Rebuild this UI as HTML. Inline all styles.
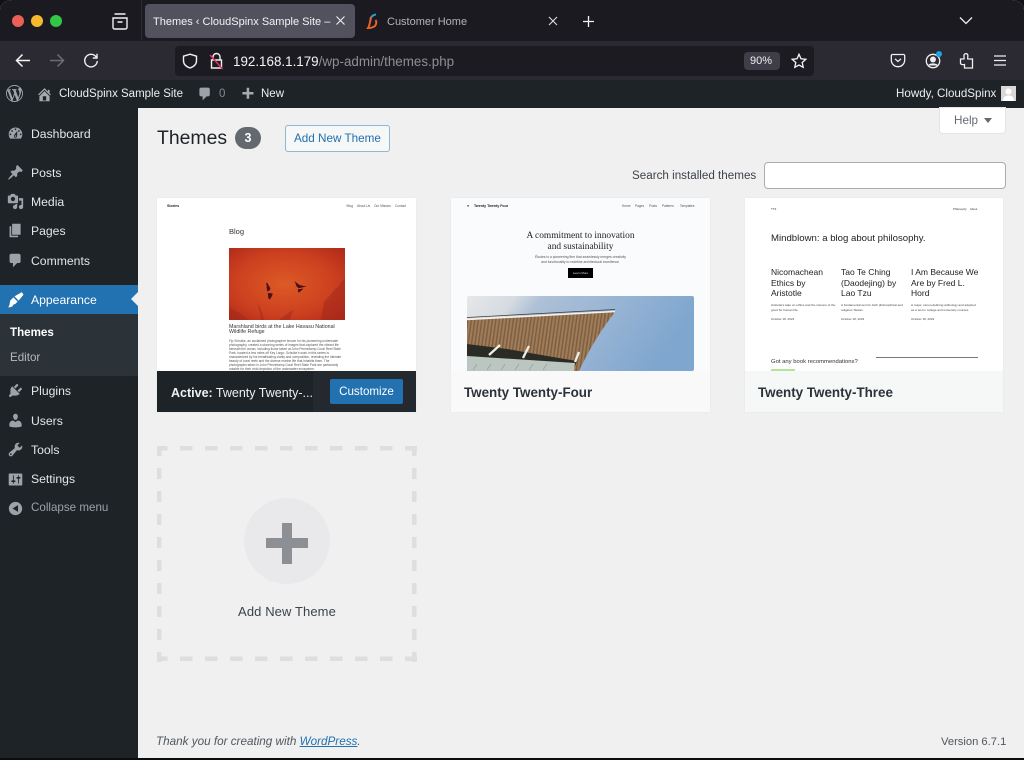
<!DOCTYPE html>
<html><head><meta charset="utf-8"><style>
html,body{margin:0;padding:0;background:#111}
#r{position:relative;width:1024px;height:760px;overflow:hidden;background:#f0f0f1;font-family:"Liberation Sans",sans-serif;border-radius:12px 12px 0 0/10px 10px 0 0}
#r div,#r span.a,#r svg{position:absolute}
.t{position:absolute;white-space:nowrap;line-height:16px}
.m{color:#e4e6e8;font-size:12.200px;left:31px}
.i{left:7px;width:17px;height:17px;fill:#9ca2a7}
.n{font-size:3.200px;color:#555}
</style></head><body><div id="r">
<!-- browser chrome -->
<div style="left:0;top:0;width:1024px;height:42px;background:#1a1a20"></div>
<div style="left:0;top:41px;width:1024px;height:39px;background:#2b2a32"></div>
<div style="left:175px;top:46px;width:639px;height:30px;background:#1c1b22;border-radius:4px"></div>
<div style="left:0;top:80px;width:1024px;height:28px;background:#1d2327"></div>
<div style="left:12px;top:15px;width:12px;height:12px;border-radius:50%;background:#ec5f56"></div>
<div style="left:31px;top:15px;width:12px;height:12px;border-radius:50%;background:#f5b82e"></div>
<div style="left:50px;top:15px;width:12px;height:12px;border-radius:50%;background:#33c748"></div>
<svg style="left:111px;top:13px" width="18" height="17" viewBox="0 0 18 17" fill="none" stroke="#f2f2f2" stroke-width="1.400"><path d="M3.500 1h11M2 5h14v9.500a1.500 1.500 0 0 1-1.500 1.500h-11A1.500 1.500 0 0 1 2 14.500zM6.500 9h5"/></svg>
<div style="left:141px;top:0;width:1px;height:41px;background:#2a2a30"></div>
<div style="left:145px;top:4px;width:210px;height:34px;background:#52525e;border-radius:4px"></div>
<span class="t" style="left:153px;top:14px;font-size:11px;color:#f3f3f5;width:180px;overflow:hidden">Themes ‹ CloudSpinx Sample Site –</span>
<svg style="left:335px;top:15px" width="11" height="11" viewBox="0 0 11 11" stroke="#eee" stroke-width="1.100"><path d="M1.500 1.500l8 8M9.500 1.500l-8 8"/></svg>
<svg style="left:366px;top:13px" width="15" height="17" viewBox="0 0 15 17" fill="none"><path d="M10 1.500C6 2 4 5 4.500 8" stroke="#2aa0c8" stroke-width="2"/><path d="M5 4c-1 4-1 8-3 11 3 0 5-.5 7-2 1-1.500 2-4 .5-6" stroke="#e8622c" stroke-width="2"/></svg>
<span class="t" style="left:387px;top:14px;font-size:11px;color:#b4b4b8">Customer Home</span>
<svg style="left:548px;top:16px" width="10" height="10" viewBox="0 0 10 10" stroke="#ddd" stroke-width="1.100"><path d="M1 1l8 8M9 1l-8 8"/></svg>
<svg style="left:582px;top:15px" width="13" height="13" viewBox="0 0 13 13" stroke="#f2f2f2" stroke-width="1.300"><path d="M6.500 1v11M1 6.500h11"/></svg>
<svg style="left:959px;top:16px" width="14" height="9" viewBox="0 0 14 9" fill="none" stroke="#eee" stroke-width="1.300"><path d="M1 1.500l6 6 6-6"/></svg>
<svg style="left:15px;top:53px" width="16" height="15" viewBox="0 0 16 15" fill="none" stroke="#f4f4f4" stroke-width="1.500"><path d="M15 7.500H2M7.500 1.500l-6 6 6 6"/></svg>
<svg style="left:49px;top:53px" width="16" height="15" viewBox="0 0 16 15" fill="none" stroke="#6c6c72" stroke-width="1.500"><path d="M1 7.500h13M8.500 1.500l6 6-6 6"/></svg>
<svg style="left:83px;top:53px" width="16" height="15" viewBox="0 0 16 15" fill="none" stroke="#f0f0f0" stroke-width="1.400"><path d="M13.500 4.500A6.300 6.300 0 1 0 14.300 8M14 .8v4.200H9.800"/></svg>
<svg style="left:182px;top:53px" width="16" height="16" viewBox="0 0 16 16" fill="none" stroke="#f0f0f0" stroke-width="1.400"><path d="M8 1.200l6.500 2v4.500c0 3.500-3 6-6.500 7.300-3.500-1.300-6.500-3.800-6.500-7.300V3.200z"/></svg>
<svg style="left:209px;top:52px" width="15" height="18" viewBox="0 0 15 18" fill="none"><path d="M4 8V5a3.500 3.500 0 0 1 7 0v3M2.500 8h10v8h-10z" stroke="#f0f0f0" stroke-width="1.400"/><path d="M1 3l12.500 14" stroke="#e0325a" stroke-width="1.500"/></svg>
<span class="t" style="left:233px;top:54px;font-size:13.400px;color:#f5f5f6">192.168.1.179<span style="color:#8e8e94">/wp-admin/themes.php</span></span>
<div style="left:744px;top:52px;width:36px;height:18px;background:#3f3e48;border-radius:4px"></div>
<span class="t" style="left:750px;top:53px;font-size:11px;color:#f0f0f0">90%</span>
<svg style="left:791px;top:53px" width="16" height="16" viewBox="0 0 16 16" fill="none" stroke="#f4f4f4" stroke-width="1.300"><path d="M8 1.300l2 4.500 4.800.5-3.600 3.200 1 4.800L8 12l-4.200 2.300 1-4.800L1.200 6.300 6 5.800z"/></svg>
<svg style="left:890px;top:53px" width="16" height="15" viewBox="0 0 16 15" fill="none" stroke="#f0f0f0" stroke-width="1.300"><path d="M2.500 1.500h11a1.200 1.200 0 0 1 1.200 1.200V7a6.700 6.700 0 0 1-13.400 0V2.700a1.200 1.200 0 0 1 1.200-1.200zM5 5.800l3 2.700 3-2.700"/></svg>
<svg style="left:925px;top:53px" width="16" height="16" viewBox="0 0 16 16" fill="none" stroke="#f0f0f0" stroke-width="1.300"><circle cx="8" cy="8" r="6.700"/><circle cx="8" cy="6.500" r="2.300" fill="#f0f0f0"/><path d="M3.800 12.500c1-2 7.400-2 8.400 0" fill="#f0f0f0"/></svg>
<div style="left:936px;top:51px;width:6px;height:6px;border-radius:50%;background:#1aa5e8"></div>
<svg style="left:959px;top:52px" width="15" height="17" viewBox="0 0 15 17" fill="none" stroke="#f0f0f0" stroke-width="1.300"><path d="M1.500 7H5C5.800 6 4.500 5 5 3.200 5.500 1.200 8.300 1 8.800 3c.4 1.500-.6 3 0 4h4.700v9H5.500v-3.500C4 12.800 1.500 12.800 1.500 11z"/></svg>
<svg style="left:994px;top:55px" width="12" height="11" viewBox="0 0 12 11" stroke="#eee" stroke-width="1.300"><path d="M0 1h12M0 5.500h12M0 10h12"/></svg>
<!-- admin bar -->
<svg style="left:6px;top:85px" width="17" height="17" viewBox="0 0 20 20" fill="#9ca2a7"><path d="M20 10c0-5.510-4.490-10-10-10C4.480 0 0 4.490 0 10c0 5.520 4.480 10 10 10 5.510 0 10-4.480 10-10zM7.780 15.370L4.370 6.220c.55-.02 1.170-.08 1.170-.08.5-.06.44-1.130-.06-1.110 0 0-1.450.11-2.370.11-.18 0-.37 0-.58-.01C4.120 2.690 6.890 1.160 10 1.160c2.320 0 4.430.83 6.020 2.260-.68-.11-1.650.39-1.650 1.580 0 .74.45 1.360.9 2.100.35.610.55 1.360.55 2.460 0 1.490-1.400 5-1.400 5l-3.030-8.370c.54-.02.82-.17.82-.17.5-.05.44-1.250-.06-1.220 0 0-1.440.12-2.380.12-.87 0-2.330-.12-2.330-.12-.5-.03-.56 1.200-.06 1.220l.92.08 1.260 3.410zM17.410 10c.24-.64.74-1.870.43-4.250.7 1.290 1.050 2.710 1.050 4.250 0 3.290-1.730 6.240-4.480 7.820.99-2.650 1.990-5.180 3-7.820zM6.100 18.090C3.120 16.650 1.110 13.530 1.110 10c0-1.300.23-2.480.72-3.590C3.250 10.300 4.670 14.200 6.100 18.090zm4.030-6.630l2.580 6.980c-.86.290-1.760.45-2.710.45-.79 0-1.570-.11-2.290-.33.810-2.380 1.620-4.740 2.420-7.100z"/></svg>
<svg style="left:36px;top:86px" width="17" height="17" viewBox="0 0 20 20" fill="#a5aaae"><path d="M16 8.500l1.530 1.530-1.060 1.060L10 4.620l-6.470 6.470-1.060-1.060L10 2.500l4 4v-2h2v4zm-6-2.460l6 5.990V18H4v-5.970zM12 17v-5H8v5h4z"/></svg>
<span class="t" style="left:59px;top:86px;font-size:11.500px;color:#eceeef">CloudSpinx Sample Site</span>
<svg style="left:197px;top:86px" width="16" height="16" viewBox="0 0 20 20" fill="#9ca2a7"><path d="M5 2h9c1.100 0 2 .9 2 2v7c0 1.100-.9 2-2 2h-2l-5 5v-5H5c-1.100 0-2-.9-2-2V4c0-1.100.9-2 2-2z"/></svg>
<span class="t" style="left:219px;top:86px;font-size:11.500px;color:#84898d">0</span>
<svg style="left:239px;top:86px" width="17" height="17" viewBox="0 0 20 20" fill="#a5aaae"><path d="M17 7v3h-5v5H9v-5H4V7h5V2h3v5h5z"/></svg>
<span class="t" style="left:261px;top:86px;font-size:11.500px;color:#eceeef">New</span>
<span class="t" style="left:896px;top:86px;font-size:11.600px;color:#eceeef">Howdy, CloudSpinx</span>
<div style="left:1001px;top:86px;width:15px;height:15px;background:#d8d8d8"></div>
<svg style="left:1001px;top:86px" width="15" height="15" viewBox="0 0 15 15" fill="#fff"><circle cx="7.500" cy="5.500" r="3"/><path d="M2 15c0-4 2.500-5.500 5.500-5.500S13 11 13 15z"/></svg>
<!-- sidebar -->
<div style="left:0;top:108px;width:138px;height:652px;background:#1d2327"></div>
<div style="left:0;top:285px;width:138px;height:29px;background:#2271b1"></div>
<div style="left:0;top:314px;width:138px;height:62px;background:#2c3338"></div>
<div style="left:131px;top:292px;width:0;height:0;border:7px solid transparent;border-left:0;border-right:7px solid #f0f0f1"></div>
<svg class="i" style="top:125px" viewBox="0 0 20 20"><path d="M3.760 16h12.480c1.100-1.370 1.760-3.110 1.760-5 0-4.420-3.580-8-8-8s-8 3.580-8 8c0 1.890.66 3.630 1.760 5zM10 4c.55 0 1 .45 1 1s-.45 1-1 1-1-.45-1-1 .45-1 1-1zM6 6c.55 0 1 .45 1 1s-.45 1-1 1-1-.45-1-1 .45-1 1-1zm8 0c.55 0 1 .45 1 1s-.45 1-1 1-1-.45-1-1 .45-1 1-1zm-5.370 5.550L12 7v6c0 1.100-.9 2-2 2s-2-.9-2-2c0-.57.25-1.080.63-1.450zM4 10c.55 0 1 .45 1 1s-.45 1-1 1-1-.45-1-1 .45-1 1-1zm12 0c.55 0 1 .45 1 1s-.45 1-1 1-1-.45-1-1 .45-1 1-1zm-5 3c0-.55-.45-1-1-1s-1 .45-1 1 .45 1 1 1 1-.45 1-1z" fill-rule="evenodd"/></svg>
<span class="t m" style="top:126px">Dashboard</span>
<svg class="i" style="top:164px" viewBox="0 0 20 20"><path d="M10.440 3.020l1.820-1.820 6.360 6.350-1.830 1.820c-1.050-.68-2.480-.57-3.410.36l-.75.75c-.92.930-1.040 2.350-.35 3.400l-1.830 1.820-2.410-2.410-2.800 2.790c-.42.420-3.380 2.710-3.800 2.290s1.860-3.390 2.280-3.810l2.790-2.790L4.100 9.360l1.830-1.820c1.050.69 2.480.57 3.400-.36l.75-.75c.93-.92 1.050-2.350.36-3.410z"/></svg>
<span class="t m" style="top:165px">Posts</span>
<svg class="i" style="top:193px" viewBox="0 0 20 20"><path d="M13 11V4c0-.55-.45-1-1-1h-1.670L9 1H5L3.670 3H2c-.55 0-1 .45-1 1v7c0 .55.45 1 1 1h10c.55 0 1-.45 1-1zM7 4.500c1.380 0 2.500 1.120 2.500 2.500S8.380 9.500 7 9.500 4.500 8.380 4.500 7 5.620 4.500 7 4.500zM14 6h5v10.500c0 1.380-1.120 2.500-2.500 2.500S14 17.880 14 16.500s1.120-2.500 2.500-2.500c.17 0 .34.020.5.050V9h-3V6zm-4 8.050V13h2v3.500c0 1.380-1.120 2.500-2.500 2.500S7 17.880 7 16.500 8.120 14 9.500 14c.17 0 .34.020.5.050z"/></svg>
<span class="t m" style="top:194px">Media</span>
<svg class="i" style="top:222px" viewBox="0 0 20 20"><path d="M6 15V2h10v13H6zm-1 1h8v2H3V5h2v11z"/></svg>
<span class="t m" style="top:223px">Pages</span>
<svg class="i" style="top:252px" viewBox="0 0 20 20"><path d="M5 2h9c1.100 0 2 .9 2 2v7c0 1.100-.9 2-2 2h-2l-5 5v-5H5c-1.100 0-2-.9-2-2V4c0-1.100.9-2 2-2z"/></svg>
<span class="t m" style="top:253px">Comments</span>
<svg class="i" style="top:291px;fill:#fff" viewBox="0 0 16 16"><path d="M15.500 3.500L14 1 7 5 11 9zM6 6l4 4-2.500 2.500c-1-.5-1.500.5-2.500 2-.5.500-3.500 1-4 1 1-1.500 1.500-2.500 1.500-3.500S3 10 3 9z"/></svg>
<span class="t m" style="top:292px;color:#fff">Appearance</span>
<span class="t" style="left:10px;top:325px;font-size:11.600px;font-weight:bold;color:#fff">Themes</span>
<span class="t" style="left:10px;top:350px;font-size:11.600px;color:#b4b9be">Editor</span>
<svg class="i" style="top:382px" viewBox="0 0 20 20"><path d="M13.110 4.360L9.870 7.600 8 5.730l3.240-3.240c.35-.34 1.050-.2 1.560.32.52.51.66 1.210.31 1.550zm-8 1.770l.91-1.120 9.010 9.010-1.190.84c-.71.710-2.630 1.160-3.820 1.160H6.140L4.900 17.260c-.59.590-1.540.59-2.120 0-.59-.58-.59-1.530 0-2.120l1.240-1.240v-3.880c0-1.130.4-3.050 1.090-3.890zm7.260 3.970l3.240-3.240c.34-.35 1.040-.21 1.550.31.52.51.66 1.210.31 1.550l-3.240 3.250z"/></svg>
<span class="t m" style="top:383px">Plugins</span>
<svg class="i" style="top:412px" viewBox="0 0 20 20"><path d="M10 9.250c-2.270 0-2.730-3.440-2.730-3.440C7 4.020 7.820 2 9.970 2c2.160 0 2.980 2.020 2.710 3.810 0 0-.41 3.440-2.680 3.440zm0 2.570L12.720 10c2.390 0 4.520 2.330 4.520 4.530v2.490s-3.650 1.130-7.240 1.130c-3.650 0-7.240-1.130-7.240-1.130v-2.490c0-2.250 1.940-4.480 4.470-4.480z"/></svg>
<span class="t m" style="top:413px">Users</span>
<svg class="i" style="top:441px" viewBox="0 0 20 20"><path d="M16.680 9.770c-1.340 1.340-3.300 1.670-4.950.99l-5.410 6.520c-.99.990-2.590.990-3.570 0-.99-.98-.99-2.580 0-3.570l6.520-5.420c-.68-1.650-.35-3.610.99-4.950 1.280-1.280 3.120-1.620 4.720-1.060l-2.890 2.890 2.820 2.820 2.860-2.870c.53 1.580.18 3.390-1.090 4.670zM3.810 16.210c.4.390 1.040.39 1.430 0 .4-.4.400-1.040 0-1.430-.39-.4-1.030-.4-1.430 0-.39.390-.39 1.030 0 1.430z"/></svg>
<span class="t m" style="top:442px">Tools</span>
<svg class="i" style="top:471px" viewBox="0 0 20 20"><path d="M18 16V4c0-.55-.45-1-1-1H3c-.55 0-1 .45-1 1v12c0 .55.45 1 1 1h14c.55 0 1-.45 1-1zM8 11h1c.55 0 1 .45 1 1s-.45 1-1 1H8v1.500c0 .28-.22.5-.5.5s-.5-.22-.5-.5V13H6c-.55 0-1-.45-1-1s.45-1 1-1h1V5.500c0-.28.22-.5.5-.5s.5.220.5.5V11zm5-2h-1c-.55 0-1-.45-1-1s.45-1 1-1h1V5.500c0-.28.22-.5.5-.5s.5.220.5.5V7h1c.55 0 1 .45 1 1s-.45 1-1 1h-1v5.500c0 .28-.22.5-.5.5s-.5-.22-.5-.5V9z"/></svg>
<span class="t m" style="top:471px">Settings</span>
<svg class="i" style="top:500px" viewBox="0 0 20 20"><path d="M10 2.160c4.330 0 7.840 3.510 7.840 7.840s-3.510 7.840-7.840 7.840S2.160 14.330 2.160 10 5.670 2.160 10 2.160zM13 6v8L6.500 10z" fill-rule="evenodd"/></svg>
<span class="t" style="left:31px;top:500px;font-size:11.600px;color:#9ca2a7">Collapse menu</span>
<!-- header -->
<span class="t" style="left:157px;top:125px;font-size:19.400px;line-height:26px;color:#1d2327">Themes</span>
<div style="left:235px;top:127px;width:26px;height:22px;border-radius:11px;background:#646970"></div>
<span class="t" style="left:235px;top:130px;width:26px;text-align:center;font-size:12.500px;font-weight:bold;color:#fff">3</span>
<div style="left:285px;top:125px;width:103px;height:25px;border:1px solid #8fb6d3;border-radius:3px;background:#f6f7f7"></div>
<span class="t" style="left:294px;top:130px;font-size:11.700px;line-height:17px;color:#2271b1">Add New Theme</span>
<div style="left:940px;top:108px;width:65px;height:25px;background:#fff;border-radius:0 0 3px 3px;box-shadow:0 0 0 1px #e4e4e6"></div>
<span class="t" style="left:954px;top:113px;font-size:11.700px;color:#646970">Help</span>
<div style="left:984px;top:118px;width:0;height:0;border:4px solid transparent;border-bottom:0;border-top:5px solid #646970"></div>
<span class="t" style="left:632px;top:168px;font-size:11.650px;color:#3c434a">Search installed themes</span>
<div style="left:764px;top:162px;width:240px;height:25px;background:#fff;border:1px solid #a9adb1;border-radius:4px"></div>
<!-- card 1 -->
<div style="left:157px;top:198px;width:259px;height:214px;background:#fff;box-shadow:0 0 2px rgba(0,0,0,.06)"></div>
<span class="t" style="left:167px;top:198px;font-size:3.600px;font-weight:bold;color:#222">Stories</span>
<span class="t n" style="left:346.500px;top:198px">Blog</span>
<span class="t n" style="left:357px;top:198px">About Us</span>
<span class="t n" style="left:374px;top:198px">Our Mission</span>
<span class="t n" style="left:395px;top:198px">Contact</span>
<span class="t" style="left:229px;top:224px;font-size:7.500px;color:#333">Blog</span>
<svg style="left:229px;top:248px" width="116" height="72" viewBox="0 0 116 72"><defs><radialGradient id="g1" cx="48%" cy="50%" r="68%"><stop offset="0" stop-color="#dd5a26"/><stop offset=".65" stop-color="#cb3f1f"/><stop offset="1" stop-color="#b12c1a"/></radialGradient></defs><rect width="116" height="72" fill="url(#g1)"/><path d="M37 35c1.200-.5 2 .5 2.200 1.800.7 1.200 1.800 2.200 2 3.500.2 1.400-.9 2.700-2.200 2.700l-.5 1c-.4-2-.7-2.300-.8-3.600-.2-2 .2-3.500-.7-5.400zM65.500 33l3 2.500c2 2.200 5.500 2.100 9 3l-4.500 1c-2.300.9-3.700.7-5-.5-1-1.400-1.300-3.800-2.500-6zM39 45c1.700.1 4 .3 4.800.8-.8 2.400-2 5-3.600 5.800-1.200-1.700-1.200-4.200-1.200-6.600zM69 41c1.700 0 4-.2 5.500-.4-1.500 1.600-3 2.800-4.800 4-.8-1-.9-2.400-.7-3.600z" fill="#4a1218"/><path d="M116 30c-3 3-5 6-7 9-3 1-4 4-6 6-3 4-6 6-8 9l-3 18h24zM0 60c7 2 12 6 20 12H0zM50 72c4-3 9-7 14-10l-3 10zM28 54c3 5 6 12 7 18h-3c-1-6-2-12-4-18z" fill="#9f2519" opacity=".5"/></svg>
<span class="t" style="left:229px;top:324.500px;font-size:5.300px;line-height:5.500px;color:#333">Marshland birds at the Lake Havasu National<br>Wildlife Refuge</span>
<span class="t" style="left:229px;top:338.500px;font-size:3.200px;line-height:4px;color:#555;white-space:normal;width:116px;height:32px;overflow:hidden">Fip Schulke, an acclaimed photographer known for his pioneering underwater photography, created a stunning series of images that captured the vibrant life beneath the ocean, including those taken at John Pennekamp Coral Reef State Park, located a few miles off Key Largo. Schulke's work in this series is characterized by his breathtaking clarity and composition, revealing the intimate beauty of coral reefs and the diverse marine life that inhabits them. The photographs taken in John Pennekamp Coral Reef State Park are particularly notable for their vivid depiction of the underwater ecosystem.</span>
<div style="left:157px;top:371px;width:259px;height:41px;background:#1d2327"></div>
<div style="left:313px;top:371px;width:103px;height:41px;background:#23292e"></div>
<span class="t" style="left:171px;top:385px;font-size:12.500px;color:#f0f0f1"><b>Active:</b> Twenty Twenty-...</span>
<div style="left:330px;top:379px;width:73px;height:25px;background:#2271b1;border-radius:2px"></div>
<span class="t" style="left:330px;top:384px;width:73px;text-align:center;font-size:11.600px;line-height:15px;color:#fff">Customize</span>
<!-- card 2 -->
<div style="left:451px;top:198px;width:259px;height:214px;background:#fafbfc;box-shadow:0 0 2px rgba(0,0,0,.05)"></div>
<span class="t" style="left:467px;top:198px;font-size:3.600px;font-weight:bold;color:#222">●</span>
<span class="t" style="left:474px;top:198px;font-size:3.600px;font-weight:bold;color:#222">Twenty Twenty Four</span>
<span class="t n" style="left:622px;top:198px">Home</span>
<span class="t n" style="left:635px;top:198px">Pages</span>
<span class="t n" style="left:649px;top:198px">Posts</span>
<span class="t n" style="left:662px;top:198px">Patterns</span>
<span class="t n" style="left:680px;top:198px">Templates</span>
<span class="t" style="left:451px;top:231px;width:259px;text-align:center;font-family:'Liberation Serif',serif;font-size:9.400px;line-height:11px;color:#222">A commitment to innovation<br>and sustainability</span>
<span class="t" style="left:451px;top:255px;width:259px;text-align:center;font-size:3.400px;line-height:5px;color:#555">Études is a pioneering firm that seamlessly merges creativity<br>and functionality to redefine architectural excellence.</span>
<div style="left:568px;top:268px;width:25px;height:10px;background:#000"></div>
<span class="t" style="left:568px;top:265px;width:25px;text-align:center;font-size:3px;color:#ddd">Learn More</span>
<svg style="left:467px;top:296px" width="227" height="75" viewBox="0 0 227 75"><defs><linearGradient id="sk" x1="0" x2="1" y1="0" y2=".25"><stop offset="0" stop-color="#e6e8e9"/><stop offset=".2" stop-color="#d5dbe1"/><stop offset=".32" stop-color="#adc0d6"/><stop offset=".6" stop-color="#9bb6d4"/><stop offset="1" stop-color="#7fa6cf"/></linearGradient><pattern id="wd" width="3.500" height="10" patternUnits="userSpaceOnUse" patternTransform="skewX(-8)"><rect width="3.500" height="10" fill="#a07c58"/><rect width="1.500" height="10" fill="#7d5f43"/></pattern></defs><rect width="227" height="75" rx="2" fill="url(#sk)"/><path d="M0 24L148 16C137 30 125 48 112 75H0z" fill="url(#wd)"/><path d="M0 23.500L148 15.500" stroke="#f4f1ea" stroke-width="1.600"/><path d="M0 21.500L148 13.500" stroke="#3c3830" stroke-width=".7"/><path d="M0 48l40 5 40 7 30 5-4 10H0z" fill="#2b2b25"/><path d="M0 60l108 7-1 8H0z" fill="#bcc6c0"/><path d="M22 59L33 49M56 62L62 50M108 66l4-10" stroke="#eef0e8" stroke-width="2.300"/><path d="M6 74l4-6M20 74l4-6M34 74l4-6M48 74l4-6M62 74l4-6M76 74l4-6" stroke="#8b938f" stroke-width=".6"/></svg>
<div style="left:451px;top:371px;width:259px;height:41px;background:#f9f9fa"></div>
<span class="t" style="left:464px;top:385px;font-size:13.400px;font-weight:bold;color:#2c3338">Twenty Twenty-Four</span>
<!-- card 3 -->
<div style="left:745px;top:198px;width:258px;height:214px;background:#fff;box-shadow:0 0 2px rgba(0,0,0,.05)"></div>
<span class="t" style="left:771px;top:201px;font-size:3px;color:#333">TT3</span>
<span class="t" style="left:953px;top:201px;font-size:2.800px;color:#333">Philosophy</span>
<span class="t" style="left:970px;top:201px;font-size:2.800px;color:#333">About</span>
<span class="t" style="left:771px;top:231px;font-size:9.600px;color:#222">Mindblown: a blog about philosophy.</span>
<span class="t" style="left:771px;top:267px;font-size:8.500px;line-height:10.700px;color:#222">Nicomachean<br>Ethics by<br>Aristotle</span>
<span class="t" style="left:841px;top:267px;font-size:8.500px;line-height:10.700px;color:#222">Tao Te Ching<br>(Daodejing) by<br>Lao Tzu</span>
<span class="t" style="left:911px;top:267px;font-size:8.500px;line-height:10.700px;color:#222">I Am Because We<br>Are by Fred L.<br>Hord</span>
<span class="t" style="left:771px;top:303px;width:66px;font-size:3.100px;line-height:5px;color:#444;white-space:normal">Aristotle's take on ethics and the science of the good for human life.</span>
<span class="t" style="left:841px;top:303px;width:66px;font-size:3.100px;line-height:5px;color:#444;white-space:normal">A fundamental text for both philosophical and religious Taoism.</span>
<span class="t" style="left:911px;top:303px;width:67px;font-size:3.100px;line-height:5px;color:#444;white-space:normal">A major, canon-defining anthology and adopted as a text in college and university courses.</span>
<span class="t" style="left:771px;top:311px;font-size:3px;color:#444">October 18, 2023</span>
<span class="t" style="left:841px;top:311px;font-size:3px;color:#444">October 18, 2023</span>
<span class="t" style="left:911px;top:311px;font-size:3px;color:#444">October 18, 2023</span>
<span class="t" style="left:771px;top:354px;font-size:5.900px;color:#333">Got any book recommendations?</span>
<div style="left:876px;top:357px;width:102px;height:1px;background:#777"></div>
<div style="left:771px;top:369px;width:24px;height:2px;background:#b4e39a"></div>
<div style="left:745px;top:371px;width:258px;height:41px;background:#f6f7f7"></div>
<span class="t" style="left:758px;top:385px;font-size:13.400px;font-weight:bold;color:#2c3338">Twenty Twenty-Three</span>
<!-- add new -->
<svg style="left:157px;top:446px" width="260" height="216" viewBox="157 446 260 216" fill="none" stroke="#dedee0" stroke-width="4.500"><path d="M155 448.200H417" stroke-dasharray="12.500 12.500"/><path d="M155 658.800H417" stroke-dasharray="12.500 12.500"/><path d="M159.200 445V662" stroke-dasharray="11 12"/><path d="M414.300 445V662" stroke-dasharray="11 12"/></svg>
<div style="left:244px;top:498px;width:86px;height:86px;border-radius:50%;background:#e9e9eb"></div>
<div style="left:282px;top:523px;width:10px;height:41px;background:#8c8f94"></div>
<div style="left:266px;top:538px;width:42px;height:10px;background:#8c8f94"></div>
<span class="t" style="left:157px;top:604px;width:260px;text-align:center;font-size:13px;color:#3c434a;letter-spacing:.1px">Add New Theme</span>
<!-- footer -->
<span class="t" style="left:156px;top:734px;font-size:11.700px;font-style:italic;color:#50575e">Thank you for creating with <span style="color:#2271b1;text-decoration:underline">WordPress</span>.</span>
<span class="t" style="left:941px;top:734px;font-size:11.200px;color:#50575e">Version 6.7.1</span>
<div style="left:0;top:758px;width:1024px;height:2px;background:#0c0c0c"></div>
</div></body></html>
